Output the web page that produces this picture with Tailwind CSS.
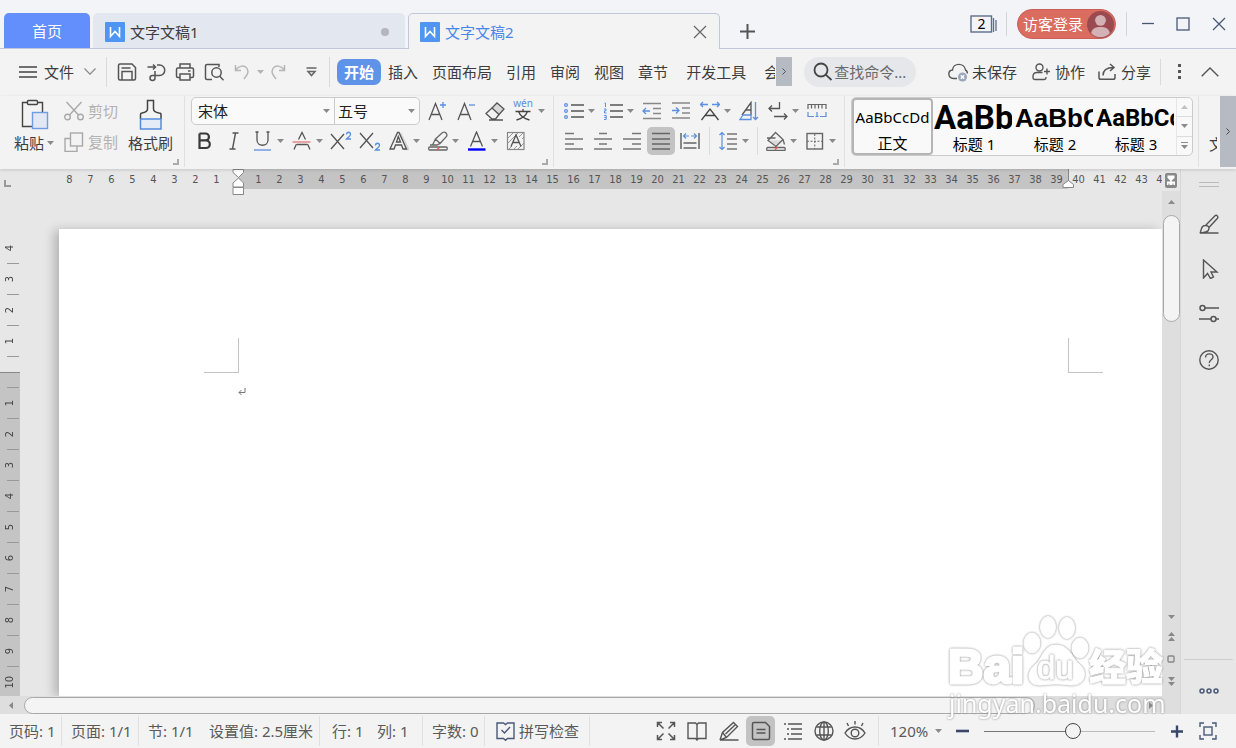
<!DOCTYPE html>
<html lang="zh-CN">
<head>
<meta charset="utf-8">
<title>文字文稿2</title>
<script src="https://cdn.jsdelivr.net/npm/@tailwindcss/browser@4"></script>
</head>
<body class="flex h-screen flex-col overflow-hidden bg-[#f3f3f3] font-['Noto_Sans','Noto_Sans_CJK_SC',sans-serif] text-[15px] leading-5 text-[#3c3c3c]">

<svg class="hidden">
  <symbol id="dn" viewBox="0 0 7 4"><path d="M0 0h7L3.5 4z" fill="#8a8a8a"/></symbol>
  <symbol id="up" viewBox="0 0 7 4"><path d="M0 4h7L3.5 0z" fill="#8a8a8a"/></symbol>
  <symbol id="w" viewBox="0 0 20 20"><rect width="20" height="20" rx="1" fill="#4f95f3"/><path d="M5.500 5v9.500l4.500-5 4.500 5V5" fill="none" stroke="#fff" stroke-width="1.600"/></symbol>
</svg>

<!-- Title bar -->
<header class="flex h-[49px] shrink-0 items-end border-b border-[#bfc7d8] bg-[#f2f4f8] pl-1">
  <button class="h-[35px] w-[86px] rounded-t-[5px] bg-[#628ffb] pt-px text-white">首页</button>
  <button class="ml-[3px] flex h-[35px] w-[312px] items-center rounded-t-[5px] bg-[#e2e7f0] pl-3 pt-[2px]">
    <svg class="h-5 w-5"><use href="#w"/></svg><span class="ml-[5px]">文字文稿1</span>
    <span class="ml-auto mr-4 h-2 w-2 rounded-full bg-[#b3b6be]"></span>
  </button>
  <div class="-mb-px ml-[3px] flex h-9 w-[312px] items-center rounded-t-[5px] border border-b-0 border-[#bfc7d8] bg-[#f3f3f3] pl-[11px] pt-px">
    <svg class="h-5 w-5"><use href="#w"/></svg><span class="ml-[5px] text-[#4a86e8]">文字文稿2</span>
    <button class="ml-auto mr-3" aria-label="关闭标签"><svg class="h-[14px] w-[14px]" viewBox="0 0 14 14" stroke="#666" stroke-width="1.200"><path d="M1 1l12 12M13 1L1 13"/></svg></button>
  </div>
  <button class="mb-[9px] ml-5" aria-label="新建"><svg class="h-[15px] w-[15px]" viewBox="0 0 15 15" stroke="#555" stroke-width="2"><path d="M7.500 0v15M0 7.500h15"/></svg></button>
  <div class="ml-auto flex h-12 items-center">
    <button class="mr-[9px]" aria-label="窗口"><svg class="h-[18px] w-[27px]" viewBox="0 0 27 18" fill="none" stroke="#5f6e88"><rect x="1" y="1" width="20.500" height="16" stroke-width="1.400"/><path d="M23.500 3v14M26 5v11" stroke-width="1.300"/><text x="11.500" y="14" text-anchor="middle" font-size="14" fill="#000" stroke="none" font-family="Noto Sans">2</text></svg></button>
    <span class="h-6 w-px bg-[#d3d5da]"></span>
    <button class="ml-[10px] flex h-[30px] items-center gap-1 rounded-full border border-[#c95f55] bg-[#da6c60] pl-[5px] pr-px text-white">访客登录
      <svg class="h-[27px] w-[27px]" viewBox="0 0 26 26"><circle cx="13" cy="13" r="13" fill="#9b4a50"/><circle cx="13" cy="9" r="5.200" fill="#d3b1b5"/><path d="M4 21.500c1-4.500 4-6 9-6s8 1.500 9 6c-5 5-13 5-18 0z" fill="#d3b1b5"/></svg></button>
    <span class="ml-[10px] h-6 w-px bg-[#d3d5da]"></span>
    <button class="ml-[15px]" aria-label="最小化"><svg class="h-3 w-3" viewBox="0 0 12 12" stroke="#4a5876" stroke-width="1.300"><path d="M0 5.500h12"/></svg></button>
    <button class="ml-[22px]" aria-label="最大化"><svg class="h-[14px] w-[14px]" viewBox="0 0 14 14" fill="none" stroke="#4a5876" stroke-width="1.300"><rect x="1" y="1" width="12" height="12"/></svg></button>
    <button class="ml-[22px] mr-[10px]" aria-label="关闭"><svg class="h-[14px] w-[14px]" viewBox="0 0 14 14" stroke="#4a5876" stroke-width="1.300"><path d="M1 1l12 12M13 1L1 13"/></svg></button>
  </div>
</header>

<!-- Menu bar -->
<nav class="flex h-[47px] shrink-0 items-center whitespace-nowrap pb-[2px]">
  <button class="ml-[19px] flex items-center gap-[7px]"><svg class="h-3 w-[18px]" viewBox="0 0 18 12" stroke="#444" stroke-width="1.300"><path d="M0 1h18M0 6h18M0 11h18"/></svg>文件<svg class="ml-[3px] h-[7px] w-3" viewBox="0 0 12 7" fill="none" stroke="#8a8a8a" stroke-width="1.200"><path d="M.5.5L6 6.200 11.500.5"/></svg></button>
  <span class="ml-[10px] mr-[10px] h-[30px] w-px bg-[#dadada]"></span>
  <div class="flex items-center gap-[9px] [&_svg]:fill-none">
    <button aria-label="保存"><svg class="h-5 w-5" viewBox="0 0 20 20" stroke="#555" stroke-width="1.500"><path d="M1.500 3.500q0-1.500 1.500-1.500h12l3.500 3.500v11q0 1.500-1.500 1.500H3q-1.500 0-1.500-1.500z"/><path d="M5 18V9.500h10V18M4.500 6h9"/></svg></button>
    <button aria-label="输出为PDF"><svg class="h-5 w-5" viewBox="0 0 20 20" stroke="#555" stroke-width="1.500"><path d="M1.500 5h8M7 2.500l2.500 2.500L7 7.500M11 3h2.500a5 5 0 0 1 0 10.500H6.500a2.500 2.500 0 1 0 2.500 2.500V9"/></svg></button>
    <button aria-label="打印"><svg class="h-5 w-5" viewBox="0 0 20 20" stroke="#555" stroke-width="1.500"><path d="M5 5.500V2h10v3.500M5 15.500H3q-1.500 0-1.500-1.500V7.500Q1.500 6 3 6h14q1.500 0 1.500 1.500V14q0 1.500-1.500 1.500h-2M5 12h10v6H5zM13 9h2.500"/></svg></button>
    <button aria-label="打印预览"><svg class="h-5 w-5" viewBox="0 0 20 20" stroke="#555" stroke-width="1.500"><path d="M8 17.500H3q-1.500 0-1.500-1.500V4Q1.500 2.500 3 2.500h12V5"/><circle cx="12.500" cy="10.500" r="4.700"/><path d="M15.500 14l4 4.200"/></svg></button>
    <button class="flex items-center gap-1" aria-label="撤销"><svg class="h-5 w-5" viewBox="0 0 20 20" stroke="#b5b5b5" stroke-width="1.500"><path d="M2.500 3v5.500H8M2.500 8.500C6 3 12 3 14 6.500s1 5-3 10.500"/></svg><svg class="-mr-[5px] h-1 w-[7px] opacity-60"><use href="#dn"/></svg></button>
    <button aria-label="恢复"><svg class="h-5 w-5" viewBox="0 0 20 20" stroke="#b5b5b5" stroke-width="1.500"><path d="M16.500 3v5.500H11M16.500 8.500C13 3 7 3 5 6.500s-1 5 3 10.500"/></svg></button>
    <button class="ml-[9px]" aria-label="自定义"><svg class="h-[10px] w-[11px]" viewBox="0 0 11 10" fill="none" stroke="#666" stroke-width="1.500"><path d="M.5 1h10M2 4.500h7L5.500 8.500z"/></svg></button>
  </div>
  <span class="ml-3 mr-[7px] h-[30px] w-px bg-[#dadada]"></span>
  <button class="h-[26px] rounded-[7px] bg-[#5e93e8] px-[7px] font-bold text-white">开始</button>
  <button class="ml-[7px]">插入</button>
  <button class="ml-[14px]">页面布局</button>
  <button class="ml-[14px]">引用</button>
  <button class="ml-[14px]">审阅</button>
  <button class="ml-[14px]">视图</button>
  <button class="ml-[14px]">章节</button>
  <button class="ml-[18px]">开发工具</button>
  <button class="ml-[18px] w-[11px] overflow-hidden">会员</button>
  <button class="ml-px flex h-[29px] w-4 items-center justify-center bg-[#b6bac3]" aria-label="更多选项卡"><svg class="h-[7px] w-1" viewBox="0 0 4 7" fill="none" stroke="#555"><path d="M.5.5l3 3-3 3"/></svg></button>
  <label class="ml-3 flex h-[30px] w-[112px] items-center rounded-full bg-[#e5e7ea] pl-[9px]">
    <svg class="h-[19px] w-5 shrink-0" viewBox="0 0 20 19" fill="none" stroke="#444" stroke-width="1.800"><circle cx="8" cy="8" r="6.500"/><path d="M12.700 12.700l5.800 5.300"/></svg>
    <input aria-label="查找命令" placeholder="查找命令..." class="ml-px w-20 min-w-0 bg-transparent outline-none placeholder:text-[#6a6a6a]">
  </label>
  <div class="ml-auto flex items-center">
    <button class="flex items-center gap-1"><svg class="h-5 w-5" viewBox="0 0 20 20" fill="none" stroke="#555" stroke-width="1.400"><path d="M9 16.500H5.500C-.5 16-.5 8.500 4.500 8c.5-7.500 12-7.500 13 0 1.500.7 2 2 1.800 3.500"/><circle cx="14.500" cy="15" r="4.500" fill="#9aa5bb" stroke="none"/><path d="M12.800 13.300l3.400 3.400M16.200 13.300l-3.400 3.400" stroke="#fff"/></svg>未保存</button>
    <button class="ml-[15px] flex items-center gap-[5px]"><svg class="h-[18px] w-[18px]" viewBox="0 0 18 18" fill="none" stroke="#555" stroke-width="1.400"><circle cx="7.500" cy="4.500" r="3.500"/><path d="M10.500 9.500H5Q1 9.500 1 13.500v1.300q0 1.700 1.700 1.700h9.600q1.700 0 1.700-1.700V14M12 8.500h6M15 5.500v6"/></svg>协作</button>
    <button class="ml-[13px] flex items-center gap-[5px]"><svg class="h-[18px] w-[18px]" viewBox="0 0 18 18" fill="none" stroke="#555" stroke-width="1.500"><path d="M1 8.500v6q0 1.800 1.800 1.800h12.400q1.800 0 1.800-1.800V11M5 12.500c0-5.500 3-8 10.500-8M12 1l4 3.500-4 3.500"/></svg>分享</button>
    <span class="ml-[9px] h-[26px] w-px bg-[#dadada]"></span>
    <button class="ml-[17px]" aria-label="更多"><svg class="h-[15px] w-[3px]" viewBox="0 0 3 15" fill="#555"><path d="M0 0h3v3H0zM0 6h3v3H0zM0 12h3v3H0z"/></svg></button>
    <button class="ml-5 mr-[17px]" aria-label="折叠功能区"><svg class="h-[10px] w-[18px]" viewBox="0 0 18 10" fill="none" stroke="#555" stroke-width="1.400"><path d="M.7 9.200L9 1l8.300 8.200"/></svg></button>
  </div>
</nav>

<!-- Ribbon -->
<section class="relative z-10 flex h-[73px] shrink-0 whitespace-nowrap bg-[#f3f3f3] shadow-[0_1px_3px_rgba(0,0,0,0.15)] [&_button]:shrink-0">
  <div class="relative flex w-[184px] shrink-0 items-start pl-[14px]">
    <button class="flex w-10 flex-col items-center">
      <svg class="mt-[3px] h-[31px] w-[30px]" viewBox="0 0 30 31" fill="none"><path d="M9 3.500H3.500v24H13M19 3.500h4.500V13" stroke="#444" stroke-width="1.400"/><rect x="8.500" y="1.500" width="10" height="4" rx="1" stroke="#444" stroke-width="1.400"/><rect x="13.500" y="13.500" width="15" height="16" fill="#e1e8f4" stroke="#6f9ce2" stroke-width="1.400"/></svg>
      <span class="mt-[3px] flex items-center gap-[3px]">粘贴<svg class="h-1 w-[7px]"><use href="#dn"/></svg></span>
    </button>
    <div class="ml-[10px] mt-[5px] flex flex-col gap-[11px] text-[#b2b2b2]">
      <button class="flex items-center gap-1"><svg class="h-5 w-5" viewBox="0 0 20 20" fill="none" stroke="#a9a9a9" stroke-width="1.400"><path d="M2.500 1l12 13M17.500 1l-12 13"/><circle cx="3.500" cy="16" r="2.800"/><circle cx="16.500" cy="16" r="2.800"/></svg>剪切</button>
      <button class="flex items-center gap-1"><svg class="h-5 w-5" viewBox="0 0 20 20" fill="none" stroke="#a9a9a9" stroke-width="1.400"><path d="M6.500 6.500H1v13h12v-5.500"/><rect x="6.500" y="1" width="12" height="13"/></svg>复制</button>
    </div>
    <button class="ml-[10px] flex flex-col items-center">
      <svg class="mt-[3px] h-[31px] w-6" viewBox="0 0 24 31" fill="none"><path d="M1.500 20v-4.500q0-1.500 1.500-1.500 5.500-1 5.500-4V1.500h6V10q0 3 5.500 4 2 0 2 1.500V20" stroke="#444" stroke-width="1.500"/><rect x="1.500" y="20" width="20.500" height="10" fill="#e4ecf8" stroke="#4a86dc" stroke-width="1.400"/></svg>
      <span class="mt-[3px]">格式刷</span>
    </button>
    <svg class="absolute bottom-1 right-[5px] h-[6px] w-[6px]" viewBox="0 0 6 6" fill="none" stroke="#aaa" stroke-width="2"><path d="M0 5h5V0"/></svg>
  </div>
  <span class="h-[71px] w-px shrink-0 bg-[#e0e0e0]"></span>

  <!-- Font group -->
  <div class="relative flex w-[368px] shrink-0 flex-col gap-[2px] pl-[6px] pt-px [&_button]:flex [&_button]:h-7 [&_button]:items-center [&_button]:pl-1">
    <div class="flex items-center">
      <div class="mr-[3px] flex h-7 w-[229px] rounded-[5px] border border-[#cbcbcb] bg-[#fafafa]">
        <span class="relative flex w-[143px] items-center border-r border-[#cbcbcb]"><select aria-label="字体" class="w-full appearance-none pl-[6px] text-[#222] outline-none"><option>宋体</option></select><svg class="absolute right-1 h-1 w-[7px]"><use href="#dn"/></svg></span>
        <span class="relative flex flex-1 items-center"><select aria-label="字号" class="w-full appearance-none pl-[3px] text-[#222] outline-none"><option>五号</option></select><svg class="absolute right-1 h-1 w-[7px]"><use href="#dn"/></svg></span>
      </div>
      <button class="w-[29px]" aria-label="增大字号"><svg class="h-5 w-5" viewBox="0 0 20 20" fill="none" stroke="#555" stroke-width="1.300"><path d="M2 19L8.500 2.500 15 19M4.500 13.500h8"/><path d="M13 4h6M16 1v6" stroke="#5b8fe0"/></svg></button>
      <button class="w-[29px]" aria-label="减小字号"><svg class="h-5 w-5" viewBox="0 0 20 20" fill="none" stroke="#555" stroke-width="1.300"><path d="M2 19L8.500 2.500 15 19M4.500 13.500h8"/><path d="M13 4h6" stroke="#5b8fe0"/></svg></button>
      <button class="w-[29px]" aria-label="清除格式"><svg class="h-5 w-5" viewBox="0 0 20 20" fill="none" stroke="#555" stroke-width="1.300"><path d="M7 7l5-5 7 6-5 5.500z" fill="#d9d9d9"/><path d="M7 7l-6 5.500 6 5.500h3.500l3.500-4.500M4 19h14"/></svg></button>
      <button class="w-[39px]" aria-label="拼音指南"><svg class="h-6 w-5 overflow-visible" viewBox="0 0 20 24" fill="none" stroke="#444" stroke-width="1.300"><text x="9" y="8" text-anchor="middle" font-size="10" fill="#5b8fe0" stroke="none" font-family="Noto Sans">wén</text><path d="M1.500 12.500h15M9 10v2.500M4.500 12.500c1.500 4 5 7 11 8.500M13.500 12.500c-1.500 4-5 7-11 8.500"/></svg><svg class="ml-1 h-1 w-[7px]"><use href="#dn"/></svg></button>
    </div>
    <div class="flex items-center">
      <button class="w-[29px]" aria-label="加粗"><svg class="h-5 w-5" viewBox="0 0 20 20" fill="none" stroke="#3a3a3a" stroke-width="2.200"><path d="M4.500 2.500V17H11a3.800 3.800 0 0 0 0-7.600H4.500M4.500 2.500h6a3.400 3.400 0 0 1 0 6.900"/></svg></button>
      <button class="w-[29px]" aria-label="倾斜"><svg class="h-5 w-5" viewBox="0 0 20 20" fill="none" stroke="#555" stroke-width="1.400"><path d="M8.500 2h6M5.500 18h6M11.500 2l-3 16"/></svg></button>
      <button class="w-[39px]" aria-label="下划线"><svg class="h-5 w-5" viewBox="0 0 20 20" fill="none" stroke="#555" stroke-width="1.300"><path d="M4 1v8c0 7 11 7 11 0V1M2.500 1h3M13.500 1h3"/><path d="M1 19h17" stroke="#5b8fe0"/></svg><svg class="ml-1 h-1 w-[7px]"><use href="#dn"/></svg></button>
      <button class="w-[39px]" aria-label="删除线"><svg class="h-5 w-5" viewBox="0 0 20 20" fill="none" stroke="#555" stroke-width="1.300"><path d="M6.500 8.500L10 1.500l3.500 7M4.500 13L2 18.500M15.500 13l2.500 5.500M5 13.500h10"/><path d="M.5 11h18" stroke="#e58f8b" stroke-width="1.600"/></svg><svg class="ml-1 h-1 w-[7px]"><use href="#dn"/></svg></button>
      <button class="w-[29px]" aria-label="上标"><svg class="h-5 w-5 overflow-visible" viewBox="0 0 20 20" fill="none" stroke="#555" stroke-width="1.300"><path d="M0 3l13 15M13 3L0 18"/><path d="M15.500 3.500c0-3 4-3 4 0 0 1.500-2 2-4 4.500h4.500" stroke="#5b8fe0"/></svg></button>
      <button class="w-[29px]" aria-label="下标"><svg class="h-5 w-5 overflow-visible" viewBox="0 0 20 20" fill="none" stroke="#555" stroke-width="1.300"><path d="M0 2l13 15M13 2L0 17"/><path d="M15.500 14.500c0-3 4-3 4 0 0 1.500-2 2-4 4.500h4.500" stroke="#5b8fe0"/></svg></button>
      <button class="w-[39px]" aria-label="文字效果"><svg class="h-5 w-5" viewBox="0 0 20 20" fill="none"><path d="M11 2l8 16h-4" stroke="#d5d5d5" stroke-width="2.500"/><path d="M1 18L8.500 1.500h1.500L17.500 18h-3.500l-1.500-4h-6l-1.500 4zM7.500 11h4L9.300 5.500z" stroke="#555" stroke-width="1.300"/></svg><svg class="ml-1 h-1 w-[7px]"><use href="#dn"/></svg></button>
      <button class="w-[39px]" aria-label="突出显示"><svg class="h-5 w-5" viewBox="0 0 20 20" fill="none" stroke="#666" stroke-width="1.300"><path d="M7.500 8L14.500 1.500q2-1 3.500.500t.5 3.500L12 12.500zM7.500 8L4.500 14h4.500l3-1.500M4.500 14H2"/><rect x=".7" y="16" width="18.500" height="3" rx="1"/><path d="M9 19l2.500-3" stroke="#e05a50"/></svg><svg class="ml-1 h-1 w-[7px]"><use href="#dn"/></svg></button>
      <button class="w-[39px]" aria-label="字体颜色"><svg class="h-5 w-5" viewBox="0 0 20 20" fill="none" stroke="#555" stroke-width="1.300"><path d="M3.500 15.500L9.500 1l6 14.500M5.500 10.500h8"/><path d="M1 18.500h17.500" stroke="#00f" stroke-width="2.400"/></svg><svg class="ml-1 h-1 w-[7px]"><use href="#dn"/></svg></button>
      <button class="w-[29px]" aria-label="字符底纹"><svg class="h-5 w-5" viewBox="0 0 20 20" fill="none" stroke="#999"><path d="M2 7l5-5M2 12L12 2M13 6l4-4M3 18l3-3M8 18l3-3M12 18l6-6M16 8l2-2"/><rect x="1.500" y="1.500" width="16.500" height="17" stroke="#888" stroke-width="1.200"/><path d="M5 15.500L10 4l5 11.500M7 11.500h6" stroke="#555" stroke-width="1.300"/></svg></button>
    </div>
    <svg class="absolute bottom-1 right-[5px] h-[6px] w-[6px]" viewBox="0 0 6 6" fill="none" stroke="#aaa" stroke-width="2"><path d="M0 5h5V0"/></svg>
  </div>
  <span class="h-[71px] w-px shrink-0 bg-[#e0e0e0]"></span>

  <!-- Paragraph group -->
  <div class="relative flex w-[290px] shrink-0 flex-col gap-[2px] pl-[6px] pt-px [&_button]:flex [&_button]:h-7 [&_button]:items-center [&_button]:pl-1 [&_svg]:fill-none">
    <div class="flex items-center">
      <button class="w-[39px]" aria-label="项目符号"><svg class="h-5 w-5" viewBox="0 0 20 20" stroke="#555" stroke-width="1.400"><path d="M7 4h13M7 10h13M7 16h13"/><g stroke="#5b8fe0" stroke-width="1.200"><circle cx="2" cy="4" r="1.400"/><circle cx="2" cy="10" r="1.400"/><circle cx="2" cy="16" r="1.400"/></g></svg><svg class="ml-1 h-1 w-[7px]"><use href="#dn"/></svg></button>
      <button class="w-[39px]" aria-label="编号"><svg class="h-5 w-5" viewBox="0 0 20 20" stroke="#555" stroke-width="1.400"><path d="M7 4h13M7 10h13M7 16h13"/><path d="M1.500 2h1v4M1 8h2v1.800H1.500V12h2M1 14.500h2.200v2H1.500h1.700V18.500H1" stroke="#5b8fe0" stroke-width="1"/></svg><svg class="ml-1 h-1 w-[7px]"><use href="#dn"/></svg></button>
      <button class="w-[29px]" aria-label="减少缩进"><svg class="h-5 w-5" viewBox="0 0 20 20" stroke="#888" stroke-width="1.500"><path d="M1 2.500h18M11 7.500h8M11 12.500h8M1 17.500h18"/><path d="M8 10H1M4 7l-3 3 3 3" stroke="#5b8fe0" stroke-width="1.300"/></svg></button>
      <button class="w-[29px]" aria-label="增加缩进"><svg class="h-5 w-5" viewBox="0 0 20 20" stroke="#888" stroke-width="1.500"><path d="M1 2h18M11 7h8M11 12h8M1 17h18"/><path d="M1 9.500h7M5 6.500l3 3-3 3" stroke="#5b8fe0" stroke-width="1.300"/></svg></button>
      <button class="w-[39px]" aria-label="中文版式"><svg class="h-5 w-5" viewBox="0 0 20 20" stroke="#444" stroke-width="1.300"><path d="M1.500 19L10 8l8.500 11M5 14.500h10"/><path d="M8 3.500H.5M3 1L.5 3.500 3 6M12 3.500h7.500M17 1l2.500 2.500L17 6" stroke="#5b8fe0"/></svg><svg class="ml-1 h-1 w-[7px]"><use href="#dn"/></svg></button>
      <button class="w-[29px]" aria-label="排序"><svg class="h-5 w-5" viewBox="0 0 20 20" stroke="#555" stroke-width="1.300"><path d="M3 14L12 1.500V14M6.500 9H12"/><path d="M1 18.500L4 14h8v4.500zM16.500 1v17.500M14 16l2.500 2.500L19 16" stroke="#5b8fe0"/></svg></button>
      <button class="w-[39px]" aria-label="显示段落标记"><svg class="h-5 w-5" viewBox="0 0 20 20" stroke="#555" stroke-width="1.300"><path d="M11.500 1v6.500H1M4 4.500l-3 3 3 3M6 15.500h13M16 12.500l3 3-3 3"/></svg><svg class="ml-1 h-1 w-[7px]"><use href="#dn"/></svg></button>
      <button class="w-[29px]" aria-label="标尺"><svg class="h-5 w-5" viewBox="0 0 20 20" stroke="#666" stroke-width="1.200"><path d="M1 8V3.500h18V8M4.500 4v3.500M8 4v3.500M11.500 4v3.500M15 4v3.500"/><path d="M1 11v4.500h6M10 11v4.500M8.500 15.500h3M19 11v4.500h-6" stroke="#5b8fe0"/></svg></button>
    </div>
    <div class="flex items-center">
      <button class="w-[29px]" aria-label="左对齐"><svg class="h-5 w-5" viewBox="0 0 20 20" stroke="#777" stroke-width="1.500"><path d="M1 2.500h9M1 8h18M1 13h9M1 18h18"/></svg></button>
      <button class="w-[29px]" aria-label="居中"><svg class="h-5 w-5" viewBox="0 0 20 20" stroke="#777" stroke-width="1.500"><path d="M6 2.500h8M1 8h18M6 13h8M1 18h18"/></svg></button>
      <button class="w-[29px]" aria-label="右对齐"><svg class="h-5 w-5" viewBox="0 0 20 20" stroke="#777" stroke-width="1.500"><path d="M10 2.500h9M1 8h18M10 13h9M1 18h18"/></svg></button>
      <button class="w-7 rounded-[5px] bg-[#c3c3c3]" aria-label="两端对齐"><svg class="h-5 w-5" viewBox="0 0 20 20" stroke="#666" stroke-width="1.500"><path d="M1 2.500h18M1 8h18M1 13h18M1 18h18"/></svg></button>
      <button class="ml-px w-[29px]" aria-label="分散对齐"><svg class="h-5 w-5" viewBox="0 0 20 20" stroke="#666" stroke-width="1.500"><path d="M1 2v16M19 2v16M3.500 12h13M3.500 17h13"/><path d="M9 5H3.500M6 2.500L3.500 5 6 7.500M11 5h5.500M14 2.500L16.500 5 14 7.500" stroke="#5b8fe0" stroke-width="1.200"/></svg></button>
      <span class="mx-1 h-7 w-px bg-[#dcdcdc]"></span>
      <button class="w-[39px]" aria-label="行距"><svg class="h-5 w-5" viewBox="0 0 20 20" stroke="#777" stroke-width="1.500"><path d="M9 3h10M9 8h10M9 13h10M9 18h10"/><path d="M4 1.500v17M1.500 4L4 1.500 6.500 4M1.500 16L4 18.500 6.500 16" stroke="#5b8fe0" stroke-width="1.200"/></svg><svg class="ml-1 h-1 w-[7px]"><use href="#dn"/></svg></button>
      <span class="mx-1 h-7 w-px bg-[#dcdcdc]"></span>
      <button class="w-[39px]" aria-label="底纹颜色"><svg class="h-5 w-5" viewBox="0 0 20 20" stroke="#666" stroke-width="1.300"><path d="M2 9.500h15L10 16z" fill="#d9d9d9" stroke="none"/><path d="M2 9.500L9.500 1.500l7.500 7-7 7zM17 8.500l1.500 5M1 7h8.500"/><rect x=".7" y="16.500" width="18.500" height="3" rx="1"/><path d="M9 19l2.500-3" stroke="#e05a50"/></svg><svg class="ml-1 h-1 w-[7px]"><use href="#dn"/></svg></button>
      <button class="w-[39px]" aria-label="边框"><svg class="h-5 w-5" viewBox="0 0 20 20" stroke="#666" stroke-width="1.400"><rect x="2" y="2.500" width="15.500" height="15.500"/><path d="M9.750 3v15M2 10.250h15.500" stroke-width="1" stroke-dasharray="2 1.500"/></svg><svg class="ml-1 h-1 w-[7px]"><use href="#dn"/></svg></button>
    </div>
    <svg class="absolute bottom-1 right-[5px] h-[6px] w-[6px]" viewBox="0 0 6 6" stroke="#aaa" stroke-width="2"><path d="M0 5h5V0"/></svg>
  </div>
  <span class="h-[71px] w-px shrink-0 bg-[#e0e0e0]"></span>

  <!-- Style gallery -->
  <div class="ml-[6px] mt-px flex h-[59px] w-[342px] shrink-0 rounded-[5px] border border-[#cbcbcb] bg-[#f9f9f9] text-black [&_b]:flex [&_b]:h-9 [&_b]:items-center [&_b]:overflow-hidden [&_b]:pt-1">
    <button class="h-[57px] w-[81px] overflow-hidden rounded-[4px] border-2 border-[#b5b5b5]"><span class="flex h-[33px] items-center justify-center">AaBbCcDd</span><span class="block">正文</span></button>
    <button class="w-[81px] pb-[2px] pl-px"><b class="w-[78px] font-[Roboto] text-[33px]">AaBb</b><span class="block">标题 1</span></button>
    <button class="w-[81px] pb-[2px] pl-px"><b class="w-[78px] font-['Liberation_Sans'] text-[26px]">AaBbC</b><span class="block">标题 2</span></button>
    <button class="w-[81px] pb-[2px] pl-px"><b class="w-[78px] font-[Roboto] text-[24px]">AaBbCc</b><span class="block">标题 3</span></button>
    <div class="flex w-4 flex-col divide-y divide-[#dcdcdc] border-l border-[#e6e6e6] [&_button]:flex [&_button]:flex-1 [&_button]:items-center [&_button]:justify-center">
      <button aria-label="上一行"><svg class="h-1 w-[7px] opacity-50"><use href="#up"/></svg></button>
      <button aria-label="下一行"><svg class="h-1 w-[7px]"><use href="#dn"/></svg></button>
      <button aria-label="展开样式"><svg class="h-[7px] w-[7px]" viewBox="0 0 7 7" fill="#8a8a8a"><path d="M0 0h7v1H0zM0 3h7L3.500 7z"/></svg></button>
    </div>
  </div>
  <span class="ml-[5px] h-[71px] w-px shrink-0 bg-[#e0e0e0]"></span>
  <button class="ml-[10px] w-2 overflow-hidden pt-[22px]">文字排版</button>
  <button class="ml-auto flex h-[71px] w-4 items-center justify-center bg-[#b6bac3]" aria-label="更多工具"><svg class="h-[7px] w-1" viewBox="0 0 4 7" fill="none" stroke="#444"><path d="M.5.5l3 3-3 3"/></svg></button>
</section>

<!-- Work area -->
<main class="relative flex min-h-0 flex-1 bg-[#e7e7e7]">
  <div class="flex min-w-0 flex-1 flex-col">
    <div class="relative flex h-5 shrink-0 items-stretch font-['DejaVu_Sans_Condensed','DejaVu_Sans',sans-serif] text-[11px] leading-[22px] text-[#555]">
      <svg class="absolute left-1 top-[11px] h-[7px] w-[7px]" viewBox="0 0 7 7" fill="none" stroke="#999" stroke-width="2"><path d="M1 0v6h6"/></svg>
      <div id="hl" class="flex w-[238px] shrink-0 justify-end pr-[11px]"></div>
      <div id="hm" class="flex w-[830px] shrink-0 bg-[#c4c4c4] pl-[10px]"></div>
      <div id="hr" class="flex min-w-0 flex-1 overflow-hidden"></div>
      <svg class="absolute left-[232px] top-0 h-[26px] w-3" viewBox="0 0 12 26" fill="#fff" stroke="#888"><path d="M1 .5h10.500v3L6.500 8.500 1 3.500zM1 18v-4L6.500 9l5 5v4zM1 18.500h10.500v7H1z"/></svg>
      <svg class="absolute left-[1062px] top-0 h-5 w-3" viewBox="0 0 12 20" fill="#fff" stroke="#888"><path d="M6.500 0v12"/><path d="M1 18.500v-3l5.500-4 5 4v3z"/></svg>
    </div>
    <div class="flex min-h-0 flex-1">
      <div class="flex w-5 shrink-0 flex-col overflow-hidden pt-11 font-['DejaVu_Sans_Condensed','DejaVu_Sans',sans-serif] text-[11px] text-[#444]">
        <div id="vt" class="h-[139px] shrink-0"></div>
        <div id="vb" class="flex-1 border-t border-[#888] bg-[#c4c4c4]"></div>
      </div>
      <div class="min-w-0 flex-1 overflow-hidden pl-[39px] pt-10">
        <article class="h-full bg-white pl-[145px] pr-[59px] pt-[109px] shadow-[-5px_1px_10px_rgba(0,0,0,0.22)]">
          <div class="flex justify-between">
            <span class="h-[35px] w-[35px] border-b border-r border-[#c4c4c4]"></span>
            <span class="h-[35px] w-[35px] border-b border-l border-[#c4c4c4]"></span>
          </div>
          <svg class="ml-[34px] mt-[15px] h-2 w-2" viewBox="0 0 8 8" fill="none" stroke="#777"><path d="M7 0v4.500H1M3.500 2L1 4.500 3.500 7"/></svg>
        </article>
      </div>
    </div>
    <div class="relative flex h-[18px] shrink-0 items-center bg-[#dedede]">
      <svg class="ml-[9px] h-[7px] w-1" viewBox="0 0 4 7" fill="#888"><path d="M4 0v7L0 3.500z"/></svg>
      <span class="ml-[11px] h-[17px] w-[1011px] rounded-full border border-[#a8a8a8] bg-[#f4f4f4]"></span>
      <svg class="ml-auto mr-[9px] h-[7px] w-1" viewBox="0 0 4 7" fill="#888"><path d="M0 0v7l4-3.500z"/></svg>
    </div>
  </div>
  <div class="flex w-[18px] shrink-0 flex-col items-center bg-[#dedede]">
    <div class="flex h-[22px] w-full shrink-0 justify-center bg-[#e7e7e7] pt-1"><svg class="h-[15px] w-3" viewBox="0 0 12 15"><rect width="12" height="15" rx="2" fill="#888"/><path d="M2.500 2.500h7v2.500L6.800 7.500v1h3.200v3.500h-1.500v-1.500h-1v1.500h-3v-1.500h-1v1.500H2V8.500h3.200v-1L2.500 5z" fill="#fff"/></svg></div>
    <svg class="mt-[9px] h-1 w-[7px] shrink-0"><use href="#up"/></svg>
    <span class="mt-[11px] h-[107px] w-[17px] shrink-0 rounded-full border border-[#a8a8a8] bg-[#f4f4f4]"></span>
    <svg class="mt-auto h-1 w-[7px] shrink-0"><use href="#dn"/></svg>
    <svg class="mt-[13px] h-[9px] w-[7px] shrink-0" viewBox="0 0 7 9" fill="#888"><path d="M0 4h7L3.500 0zM0 9h7L3.500 5z"/></svg>
    <svg class="mt-[14px] h-2 w-2 shrink-0" viewBox="0 0 8 8" fill="none" stroke="#888" stroke-width="1.400"><rect x="1" y="1" width="6" height="6" rx="1"/></svg>
    <svg class="mb-[28px] mt-[14px] h-[9px] w-[7px] shrink-0" viewBox="0 0 7 9" fill="#888"><path d="M0 0h7L3.500 4zM0 5h7L3.500 9z"/></svg>
  </div>
  <aside class="flex w-14 shrink-0 flex-col items-center border-l border-[#d6d6d6] [&_svg]:fill-none">
    <span class="mt-[13px] h-[5px] w-5 border-y border-[#bbb]"></span>
    <button class="mt-[27px]" aria-label="样式"><svg class="h-5 w-5" viewBox="0 0 20 20" stroke="#555" stroke-width="1.400"><path d="M1 19h18.500M6.500 11.500L16 1.700q1.300-.9 2.300.200t.2 2.300L9.500 14M6.300 11.500q-3 0-3.800 3l-1.200 4q6 .5 8-2 1.400-3-.2-4.200-1.200-1-2.800-.8z"/></svg></button>
    <button class="mt-[25px]" aria-label="选择"><svg class="h-5 w-5" viewBox="0 0 20 20" stroke="#555" stroke-width="1.400"><path d="M4.500 1v18l4-4.500 3 5 3-1.500-2.500-5h6z"/></svg></button>
    <button class="mt-[25px]" aria-label="设置"><svg class="h-5 w-5" viewBox="0 0 20 20" stroke="#555" stroke-width="1.500"><circle cx="3.500" cy="4" r="2.500"/><circle cx="14.500" cy="15" r="2.500"/><path d="M6 4h14M0 15h12M17 15h3"/></svg></button>
    <button class="mt-[26px]" aria-label="帮助"><svg class="h-5 w-5" viewBox="0 0 20 20" stroke="#555" stroke-width="1.400"><circle cx="10" cy="10" r="9.200"/><path d="M6.500 7.500c0-5 7.500-4.500 7.500-.5 0 3-3.700 2.500-3.700 6M10.300 14.500v1.700"/></svg></button>
    <span class="mt-auto h-px w-[49px] bg-[#d0d0d0]"></span>
    <button class="mb-5 mt-7" aria-label="更多面板"><svg class="h-[6px] w-5" viewBox="0 0 20 6" stroke="#4a5876" stroke-width="1.500"><circle cx="3" cy="3" r="2"/><circle cx="10" cy="3" r="2"/><circle cx="17" cy="3" r="2"/></svg></button>
  </aside>
  <!-- Watermark: white shapes with a thin grey glow -->
  <svg class="pointer-events-none absolute -bottom-3 right-[64px] z-20 h-[116px] w-[228px]" viewBox="0 0 228 116" fill="#fff" stroke="#fff">
    <g class="drop-shadow-[0_0_1px_#888]">
      <ellipse cx="88" cy="33" rx="8" ry="10"/><ellipse cx="104" cy="17" rx="7.500" ry="10.500"/><ellipse cx="123" cy="18" rx="7.500" ry="10.500"/><ellipse cx="136" cy="38" rx="8" ry="10"/>
      <path d="M112 35c-13 0-13 14-21 20-9 7-8 20 4 20 8 0 9-1 17-1s9 1 16 1c13 0 16-13 8-20-8-6-10-20-24-20z"/>
    </g>
    <g class="drop-shadow-[0_0_1px_#888]" stroke-linejoin="round">
      <text x="4" y="73" font-size="49" font-weight="bold" font-family="Liberation Sans" stroke-width="3">Bai</text>
      <text x="145" y="71" font-size="37" font-weight="900" font-family="Noto Sans CJK SC" stroke-width="1">经验</text>
    </g>
    <text class="drop-shadow-[0_0_1px_#888]" x="93" y="69" font-size="33" font-family="Liberation Sans" stroke-width="1">du</text>
    <text class="drop-shadow-[0_0_1px_#888]" x="5" y="103" font-size="25" font-family="Noto Sans" stroke="none">jingyan.baidu.com</text>
  </svg>
</main>

<!-- Status bar -->
<footer class="flex h-[34px] shrink-0 items-center whitespace-nowrap pl-[9px] text-[#5a5a5a]">
  <span class="w-[52px]">页码: 1</span><span class="h-[30px] w-px bg-[#e0e0e0]"></span>
  <span class="w-[76px] pl-[9px]">页面: 1/1</span><span class="h-[30px] w-px bg-[#e0e0e0]"></span>
  <span class="w-[70px] pl-[9px]">节: 1/1</span><span class="w-[110px]">设置值: 2.5厘米</span><span class="h-[30px] w-px bg-[#e0e0e0]"></span>
  <span class="w-[57px] pl-3">行: 1</span><span class="w-[45px]">列: 1</span><span class="h-[30px] w-px bg-[#e0e0e0]"></span>
  <span class="w-[61px] pl-[9px]">字数: 0</span><span class="h-[30px] w-px bg-[#e0e0e0]"></span>
  <button class="ml-[11px] mr-[10px] flex items-center gap-1"><svg class="h-5 w-[19px]" viewBox="0 0 19 20" fill="none" stroke="#4a5876" stroke-width="1.400"><path d="M7.500 2H1v15.500h6.500l2 1.800 2-1.800H18V2h-6.500l-2 1.500zM5.500 9l3 3 5.500-6"/></svg>拼写检查</button><span class="h-[30px] w-px bg-[#e0e0e0]"></span>
  <div class="ml-auto flex items-center [&_svg]:fill-none">
    <button aria-label="全屏"><svg class="h-5 w-5" viewBox="0 0 20 20" stroke="#555" stroke-width="1.500"><path d="M7.500 7.500L1.500 1.500M1.500 6V1.500H6M12.500 7.500l6-6M14 1.500h4.500V6M7.500 12.500l-6 6M1.500 14v4.500H6M12.500 12.500l6 6M14 18.500h4.500V14"/></svg></button>
    <button class="ml-[11px]" aria-label="阅读版式"><svg class="h-5 w-5" viewBox="0 0 20 20" stroke="#555" stroke-width="1.400"><path d="M10 3.500L8.500 2H1v15.500h7.500L10 19l1.500-1.500H19V2h-7.500zM10 3.500V19"/></svg></button>
    <button class="ml-3" aria-label="写作模式"><svg class="h-5 w-5" viewBox="0 0 20 20" stroke="#555" stroke-width="1.400"><path d="M1 19l2.500-7.500L14.500 1.500l4 4L7.500 16.500 1 19h18.500M3.500 11.500l4 5M6.500 13L16 4"/></svg></button>
    <button class="ml-[7px] flex h-[30px] w-[29px] items-center justify-center rounded-[5px] bg-[#c3c3c3]" aria-label="页面视图"><svg class="h-5 w-5" viewBox="0 0 20 20" stroke="#555" stroke-width="1.500"><path d="M1.500 3q0-1.500 1.500-1.500h11.500l4 4v11.500q0 1.500-1.500 1.500H3q-1.500 0-1.500-1.500zM5.500 8.500h9M5.500 12h9"/></svg></button>
    <button class="ml-2" aria-label="大纲"><svg class="h-5 w-5" viewBox="0 0 20 20" stroke="#555" stroke-width="1.400"><path d="M1 3h2M5 3h14M4 8h2M8 8h11M4 13h2M8 13h11M1 18h2M5 18h14"/></svg></button>
    <button class="ml-[11px]" aria-label="Web版式"><svg class="h-5 w-5" viewBox="0 0 20 20" stroke="#555" stroke-width="1.400"><circle cx="10" cy="10" r="9"/><ellipse cx="10" cy="10" rx="4.300" ry="9"/><path d="M10 1v18M2.500 6h15M2.500 14h15"/></svg></button>
    <button class="ml-[10px]" aria-label="护眼模式"><svg class="h-5 w-[22px]" viewBox="0 0 22 20" stroke="#555" stroke-width="1.400"><path d="M1 12c5-8 15-8 20 0-5 8-15 8-20 0z"/><circle cx="11" cy="12" r="3.800"/><path d="M11 0v3.500M3 2l1.500 3M19 2l-1.500 3"/></svg></button>
    <span class="ml-3 h-[30px] w-px bg-[#e0e0e0]"></span>
    <button class="ml-[11px] flex w-[52px] items-center justify-between">120%<svg class="h-1 w-[7px]"><use href="#dn"/></svg></button>
    <button class="ml-[14px]" aria-label="缩小"><svg class="h-[14px] w-[13px]" viewBox="0 0 13 14" stroke="#3b4768" stroke-width="2.600"><path d="M0 7h13"/></svg></button>
    <input type="range" aria-label="显示比例" min="0" max="100" value="52" class="ml-[15px] h-4 w-[171px] appearance-none bg-[linear-gradient(to_right,#777_52%,#bbb_52%)] bg-[length:100%_1px] bg-center bg-no-repeat [&::-webkit-slider-thumb]:h-4 [&::-webkit-slider-thumb]:w-4 [&::-webkit-slider-thumb]:appearance-none [&::-webkit-slider-thumb]:rounded-full [&::-webkit-slider-thumb]:border [&::-webkit-slider-thumb]:border-[#444] [&::-webkit-slider-thumb]:bg-[#f3f3f3]">
    <button class="ml-4" aria-label="放大"><svg class="h-[13px] w-3" viewBox="0 0 12 13" stroke="#3b4768" stroke-width="2.400"><path d="M0 6.500h12M6 .5v12"/></svg></button>
    <button class="ml-4 mr-[19px]" aria-label="适合页面"><svg class="h-[18px] w-[18px]" viewBox="0 0 18 18" stroke="#4a5876" stroke-width="1.400"><path d="M5 1H1v4M13 1h4v4M5 17H1v-4M13 17h4v-4"/><rect x="5" y="5" width="8" height="8"/></svg></button>
  </div>
</footer>

<script>
const hCell = n => `<span class="w-[21px] shrink-0 text-center">${n}</span>`;
const vCell = n => `<div class="relative flex h-[31px] w-5 items-center justify-center"><span class="rotate-180 leading-5 [writing-mode:vertical-rl]">${n}</span><i class="absolute bottom-0 right-px h-px w-3 bg-[#999]"></i></div>`;
const range = (a, b) => Array.from({ length: Math.abs(b - a) + 1 }, (_, i) => a < b ? a + i : a - i);
document.getElementById('hl').innerHTML = range(8, 1).map(hCell).join('');
document.getElementById('hm').innerHTML = range(1, 39).map(hCell).join('');
document.getElementById('hr').innerHTML = range(40, 44).map(hCell).join('');
document.getElementById('vt').innerHTML = range(4, 1).map(vCell).join('');
document.getElementById('vb').innerHTML = '<div class="flex h-[15px] justify-end pr-px"><i class="mt-auto h-px w-3 bg-[#999]"></i></div>' + range(1, 10).map(vCell).join('');
</script>
</body>
</html>
